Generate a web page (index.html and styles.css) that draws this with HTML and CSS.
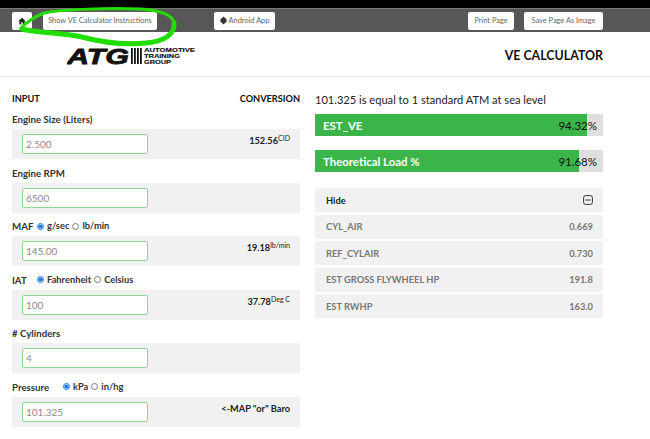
FILE: index.html
```html
<!DOCTYPE html>
<html lang="en">
<head>
  <meta charset="UTF-8" />
  <title>VE Calculator</title>
  <link rel="stylesheet" href="styles.css">
</head>
<body>
  <div class="topbar"></div>
  <div class="toolbar">
    <button class="btn btn-home">
      <svg width="8" height="8" viewBox="0 0 8 8"><path d="M4 .8 .3 4.2h1.1V7.4h1.9V5.2h1.4v2.2h1.9V4.2h1.1z" fill="#222"/></svg>
    </button>
    <button class="btn btn-help">Show VE Calculator Instructions</button>
    <button class="btn btn-android">
      <svg width="7" height="9" viewBox="0 0 7 9"><path d="M3.5 .6 6.6 3.6 6.6 5.6 3.5 8.6 .4 5.6 .4 3.6z" fill="#333"/></svg>
      Android App
    </button>
    <button class="btn btn-print">Print Page</button>
    <button class="btn btn-save">Save Page As Image</button>
  </div>

  <header class="header">
    <svg class="logo" width="130" height="30" viewBox="0 -6 130 30">
      <text class="logo-atg" x="0" y="18" textLength="62" lengthAdjust="spacingAndGlyphs">ATG</text>
      <rect x="64" y="2" width="1.8" height="16" fill="#111"/>
      <rect x="67" y="2" width="1.8" height="16" fill="#111"/>
      <rect x="70" y="2" width="1.8" height="16" fill="#111"/>
      <rect x="73" y="2" width="1.8" height="16" fill="#111"/>
      <text class="logo-small" x="77" y="5.8" textLength="51" lengthAdjust="spacingAndGlyphs">AUTOMOTIVE</text>
      <text class="logo-small" x="77" y="12.1" textLength="36" lengthAdjust="spacingAndGlyphs">TRAINING</text>
      <text class="logo-small" x="77" y="18.4" textLength="27" lengthAdjust="spacingAndGlyphs">GROUP</text>
    </svg>
    <h1>VE CALCULATOR</h1>
  </header>

  <main class="content">
    <section class="inputs">
      <div class="inputs-head"><span>INPUT</span><span>CONVERSION</span></div>

      <div class="field">
        <div class="field-label">Engine Size (Liters)</div>
        <div class="field-row">
          <input class="num" placeholder="2.500" />
          <div class="conv">152.56<sup>CID</sup></div>
        </div>
      </div>

      <div class="field">
        <div class="field-label">Engine RPM</div>
        <div class="field-row">
          <input class="num" placeholder="6500" />
        </div>
      </div>

      <div class="field">
        <div class="field-label">
          <span class="unit-name">MAF</span>
          <label><input type="radio" name="maf" checked />g/sec</label>
          <label><input type="radio" name="maf" />lb/min</label>
        </div>
        <div class="field-row">
          <input class="num" placeholder="145.00" />
          <div class="conv">19.18<sup>lb/min</sup></div>
        </div>
      </div>

      <div class="field">
        <div class="field-label">
          <span class="unit-name">IAT</span>
          <label><input type="radio" name="iat" checked />Fahrenheit</label>
          <label><input type="radio" name="iat" />Celsius</label>
        </div>
        <div class="field-row">
          <input class="num" placeholder="100" />
          <div class="conv">37.78<sup>Deg C</sup></div>
        </div>
      </div>

      <div class="field">
        <div class="field-label"># Cylinders</div>
        <div class="field-row">
          <input class="num" placeholder="4" />
        </div>
      </div>

      <div class="field">
        <div class="field-label">
          <span class="unit-name widest">Pressure</span>
          <label><input type="radio" name="press" checked />kPa</label>
          <label><input type="radio" name="press" />in/hg</label>
        </div>
        <div class="field-row">
          <input class="num" placeholder="101.325" />
          <div class="conv">&lt;-MAP "or" Baro</div>
        </div>
      </div>
    </section>

    <section class="results">
      <p class="note">101.325 is equal to 1 standard ATM at sea level</p>

      <div class="bar">
        <div class="bar-fill" style="width: 94.32%"></div>
        <span class="bar-name">EST_VE</span>
        <span class="bar-val">94.32%</span>
      </div>
      <div class="bar">
        <div class="bar-fill" style="width: 91.68%"></div>
        <span class="bar-name">Theoretical Load %</span>
        <span class="bar-val">91.68%</span>
      </div>

      <div class="stats">
        <div class="stat stat-head">
          <span>Hide</span>
          <svg width="10" height="10" viewBox="0 0 10 10"><rect x=".6" y=".6" width="8.8" height="8.8" rx="2" fill="none" stroke="#333" stroke-width="1"/><path d="M2.5 5h5" stroke="#333" stroke-width="1"/></svg>
        </div>
        <div class="stat"><span>CYL_AIR</span><span>0.669</span></div>
        <div class="stat"><span>REF_CYLAIR</span><span>0.730</span></div>
        <div class="stat"><span>EST GROSS FLYWHEEL HP</span><span>191.8</span></div>
        <div class="stat"><span>EST RWHP</span><span>163.0</span></div>
      </div>
    </section>
  </main>

  <!-- hand drawn marker from the screenshot -->
  <svg class="scribble" width="190" height="50" viewBox="0 0 190 50">
    <path d="M21 28C26 23 34 17 44 13 64 9 110 8 140 9 160 10 173 15 174 23" fill="none" stroke="#22dd00" stroke-width="3" stroke-linecap="round"/>
    <path d="M174 23C175 34 165 41 146 43 124 45 100 42 82 37 66 33 36 33 22 29" fill="none" stroke="#22dd00" stroke-width="5" stroke-linecap="round"/>
  </svg>
</body>
</html>
```

FILE: styles.css
```css
* {
  box-sizing: border-box;
  margin: 0;
  padding: 0;
  font-family: 'Lato', sans-serif;
}

html, body {
  overflow: hidden;
}

body {
  width: 650px;
  height: 439px;
  position: relative;
  background-color: #fff;
  color: #222;
}

.topbar {
  height: 8px;
  background-color: #000;
}

.toolbar {
  height: 24px;
  background-color: #575757;
  border-top: 1px solid #777;
  display: flex;
  align-items: center;
  padding-left: 12px;
}

.btn {
  height: 18px;
  background-color: #fff;
  border: 0;
  border-radius: 2px;
  color: #666;
  font-size: 7.4px;
  white-space: nowrap;
  display: flex;
  align-items: center;
  justify-content: center;
  gap: 2px;
}

.btn-home { width: 20px; }
.btn-help { width: 114px; margin-left: 11px; }
.btn-android { width: 61px; margin-left: 57px; }
.btn-print { width: 46px; margin-left: 193px; }
.btn-save { width: 79px; margin-left: 10px; }

.header {
  height: 45px;
  border-bottom: 1px solid #e3e8ee;
  display: flex;
  align-items: flex-start;
  justify-content: space-between;
  padding: 8px 47px 0 67px;
}

.logo {
  display: block;
}

.logo-atg {
  font-family: 'Liberation Sans', sans-serif;
  font-size: 22px;
  font-weight: bold;
  font-style: italic;
  fill: #111;
  stroke: #111;
  stroke-width: 0.8px;
}

.logo-small {
  font-family: 'Liberation Sans', sans-serif;
  font-size: 5.6px;
  font-weight: bold;
  fill: #111;
  stroke: #111;
  stroke-width: 0.15px;
}

.header h1 {
  font-size: 12.4px;
  font-weight: 700;
  color: #111;
  line-height: 16px;
  margin-top: 8px;
}

.content {
  display: flex;
  padding: 0 47px 0 12px;
  gap: 15px;
}

.inputs {
  width: 288px;
}

.inputs-head {
  display: flex;
  justify-content: space-between;
  font-size: 9.2px;
  font-weight: 700;
  color: #111;
  height: 27px;
  padding-top: 16px;
  line-height: 11px;
  margin-bottom: 9px;
}

.field {
  margin-bottom: 7.6px;
}

.field-label {
  height: 16px;
  font-size: 9.7px;
  font-weight: 700;
  color: #333;
  line-height: 12px;
  display: flex;
  align-items: flex-start;
}

.field-label label {
  display: flex;
  align-items: center;
  height: 12px;
  font-size: 9.3px;
  font-weight: 700;
  color: #333;
}

.field-label input {
  width: 7px;
  height: 7px;
  margin: 0 3px;
  accent-color: #1a73e8;
}

.unit-name { min-width: 22px; }
.unit-name.widest { min-width: 48px; }

.field-row {
  height: 30px;
  background-color: #f1f1f1;
  display: flex;
  justify-content: space-between;
  padding: 5px 10px 0 10px;
}

.num {
  width: 126px;
  height: 20px;
  border: 1.5px solid #8fd694;
  border-radius: 2px;
  background-color: #fff;
  padding: 0 3px;
  font-size: 10px;
}

.num::placeholder {
  color: #8b8b8b;
  opacity: 1;
}

.conv {
  font-size: 9.2px;
  font-weight: 700;
  color: #222;
  line-height: 12px;
  padding-top: 1px;
}

.conv sup {
  font-size: 7px;
  font-weight: 400;
  line-height: 0;
  vertical-align: 3px;
}

.results {
  width: 288px;
}

.note {
  font-size: 11.1px;
  color: #222;
  height: 37px;
  padding-top: 15px;
  line-height: 16px;
}

.bar {
  position: relative;
  height: 22px;
  margin-bottom: 14px;
  background-color: #dedede;
  display: flex;
  align-items: center;
  justify-content: space-between;
  padding: 0 6px 0 8px;
  font-size: 11.4px;
}

.bar-fill {
  position: absolute;
  top: 0;
  left: 0;
  bottom: 0;
  background-color: #3bb54a;
}

.bar-name {
  position: relative;
  color: #fff;
  font-weight: 700;
}

.bar-val {
  position: relative;
  color: #111;
  font-size: 11.5px;
}

.stats {
  margin-top: 16px;
  display: flex;
  flex-direction: column;
  gap: 2.5px;
}

.stat {
  height: 24px;
  background-color: #f1f1f1;
  display: flex;
  align-items: center;
  justify-content: space-between;
  padding: 0 10px 0 11px;
  font-size: 9.3px;
  font-weight: 700;
  color: #777;
}

.stat-head {
  color: #222;
}

.scribble {
  position: absolute;
  top: 0;
  left: 0;
}
```
